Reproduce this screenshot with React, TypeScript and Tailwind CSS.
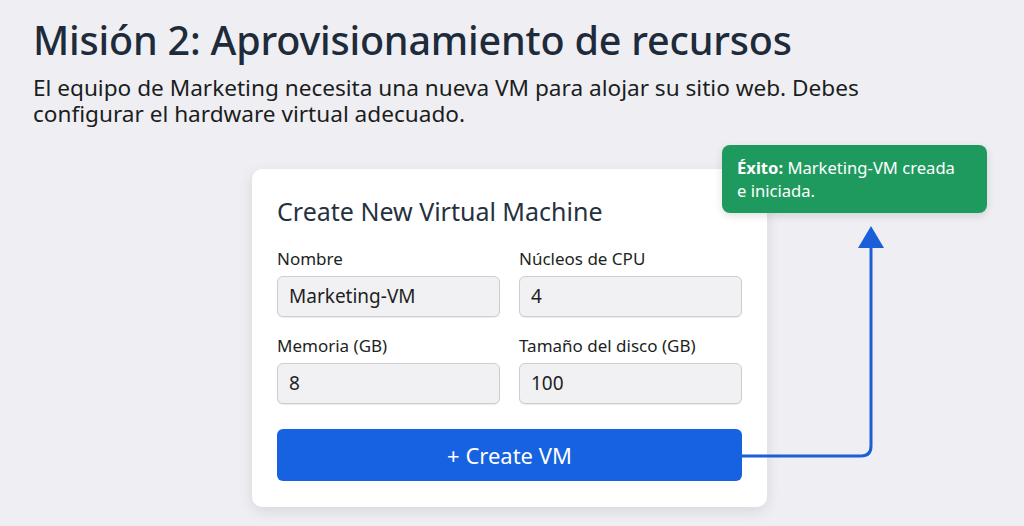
export default function App() {
  const fields = [
    { label: "Nombre", value: "Marketing-VM" },
    { label: "Núcleos de CPU", value: "4" },
    { label: "Memoria (GB)", value: "8" },
    { label: "Tamaño del disco (GB)", value: "100" },
  ];

  return (
    <div
      className="relative w-full h-[526px] overflow-hidden bg-[#efeff3] pl-[33px] pt-[14px]"
      style={{ fontFamily: '"Noto Sans", "Open Sans", sans-serif' }}
    >
      <h1 className="text-[39.5px] leading-[52px] font-medium text-[#1e2b3a] tracking-[-0.2px]">
        Misión 2: Aprovisionamiento de recursos
      </h1>
      <p className="mt-[9px] w-[900px] text-[22.6px] leading-[26px] text-[#1b1d21]">
        El equipo de Marketing necesita una nueva VM para alojar su sitio web. Debes
        <br />
        configurar el hardware virtual adecuado.
      </p>

      <div className="ml-[219px] mt-[42px] w-[515px] rounded-[10px] bg-white px-[25px] pt-[26px] pb-[26px] shadow-[0_4px_14px_rgba(0,0,0,0.10)]">
        <h2 className="text-[25px] leading-[32px] text-[#26313f]">Create New Virtual Machine</h2>
        <div className="mt-[21px] grid grid-cols-2 gap-x-[19px] gap-y-[18px]">
          {fields.map((f) => (
            <div key={f.label}>
              <div className="text-[17px] leading-[22px] text-[#1d1f23]">{f.label}</div>
              <div className="mt-[6px] h-[41px] rounded-[6px] border border-[#cdced3] bg-[#f1f1f4] px-[11px] flex items-center text-[19px] text-[#1d1f23] shadow-[0_1px_1px_rgba(0,0,0,0.08)]">
                {f.value}
              </div>
            </div>
          ))}
        </div>
        <button className="mt-[25px] h-[52px] w-full rounded-[6px] bg-[#1662e0] text-[22px] text-white">
          + Create VM
        </button>
      </div>

      <div className="absolute left-[722px] top-[145px] w-[265px] h-[68px] rounded-[8px] bg-[#1f9a5f] px-[15px] pt-[11px] text-[16.6px] leading-[23px] text-white shadow-[0_3px_8px_rgba(0,0,0,0.12)]">
        <span className="font-bold">Éxito:</span> Marketing-VM creada
        <br />
        e iniciada.
      </div>

      <svg className="absolute left-0 top-0" width="1024" height="526" fill="none">
        <path
          d="M742 456 H861 Q871 456 871 446 V244"
          stroke="#1a5fd8"
          strokeWidth="3"
        />
        <path d="M858 248 L871 226 L884 248 Z" fill="#1a5fd8" />
      </svg>
    </div>
  );
}
